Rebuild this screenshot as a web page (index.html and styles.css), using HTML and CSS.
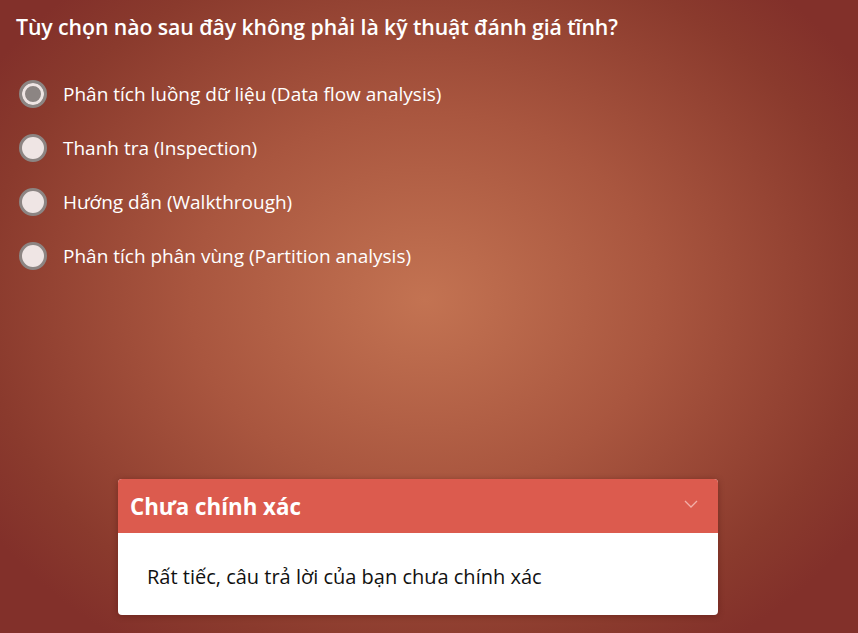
FILE: index.html
```html
<!DOCTYPE html>
<html lang="vi">
<head>
<meta charset="utf-8">
<link rel="stylesheet" href="styles.css">
</head>
<body>
<div class="page">
  <h1 class="question">Tùy chọn nào sau đây không phải là kỹ thuật đánh giá tĩnh?</h1>
  <ul class="options">
    <li class="option selected"><span class="radio"></span><span class="label">Phân tích luồng dữ liệu (Data flow analysis)</span></li>
    <li class="option"><span class="radio"></span><span class="label">Thanh tra (Inspection)</span></li>
    <li class="option"><span class="radio"></span><span class="label">Hướng dẫn (Walkthrough)</span></li>
    <li class="option"><span class="radio"></span><span class="label">Phân tích phân vùng (Partition analysis)</span></li>
  </ul>
  <div class="feedback">
    <div class="feedback-head">
      <span class="feedback-title">Chưa chính xác</span>
      <svg class="chev" width="14" height="8" viewBox="0 0 14 8"><path d="M1 1 L7 7 L13 1" fill="none" stroke="#f3b0a8" stroke-width="1.3"/></svg>
    </div>
    <div class="feedback-body">Rất tiếc, câu trả lời của bạn chưa chính xác</div>
  </div>
</div>
</body>
</html>
```

FILE: styles.css
```css
html, body {
  margin: 0;
  padding: 0;
  height: 100%;
}
body {
  width: 858px;
  height: 633px;
  overflow: hidden;
  font-family: "Open Sans", "Noto Sans", sans-serif;
  background: radial-gradient(ellipse 520px 420px at 425px 300px, #c37352 0%, #a9563f 45%, #8a3a2d 85%, #82302a 100%);
  color: #fff;
}
.page {
  display: flex;
  flex-direction: column;
  height: 100%;
  box-sizing: border-box;
  padding: 12px 0 18px 0;
}
.question {
  margin: 0 0 0 16px;
  font-size: 21.3px;
  font-weight: 600;
  line-height: 30px;
  letter-spacing: -0.1px;
}
.options {
  list-style: none;
  margin: 38px 0 0 0;
  padding: 0 0 0 19px;
  display: flex;
  flex-direction: column;
  gap: 26px;
}
.option {
  display: flex;
  align-items: center;
  height: 28px;
  gap: 16px;
}
.radio {
  width: 28px;
  height: 28px;
  box-sizing: border-box;
  border-radius: 50%;
  border: 3px solid #8c8583;
  background: #efe5e4;
  flex: none;
}
.selected .radio {
  background: #8c8583;
  box-shadow: inset 0 0 0 3px #efe5e4;
}
.label {
  font-size: 19px;
  line-height: 26px;
}
.feedback {
  margin: auto 0 0 118px;
  width: 600px;
  border-radius: 4px;
  overflow: hidden;
  background: #fff;
  box-shadow: 0 1px 6px rgba(60, 10, 5, 0.35);
}
.feedback-head {
  background: #dc5b4e;
  height: 54px;
  display: flex;
  align-items: center;
  justify-content: space-between;
  padding: 0 20px 0 12px;
}
.feedback-title {
  font-size: 22.3px;
  font-weight: 700;
  color: #fff;
}
.chev {
  margin-top: -4px;
}
.feedback-body {
  color: #111;
  font-size: 20px;
  padding: 31px 29px 25px 29px;
  line-height: 26px;
}
```
